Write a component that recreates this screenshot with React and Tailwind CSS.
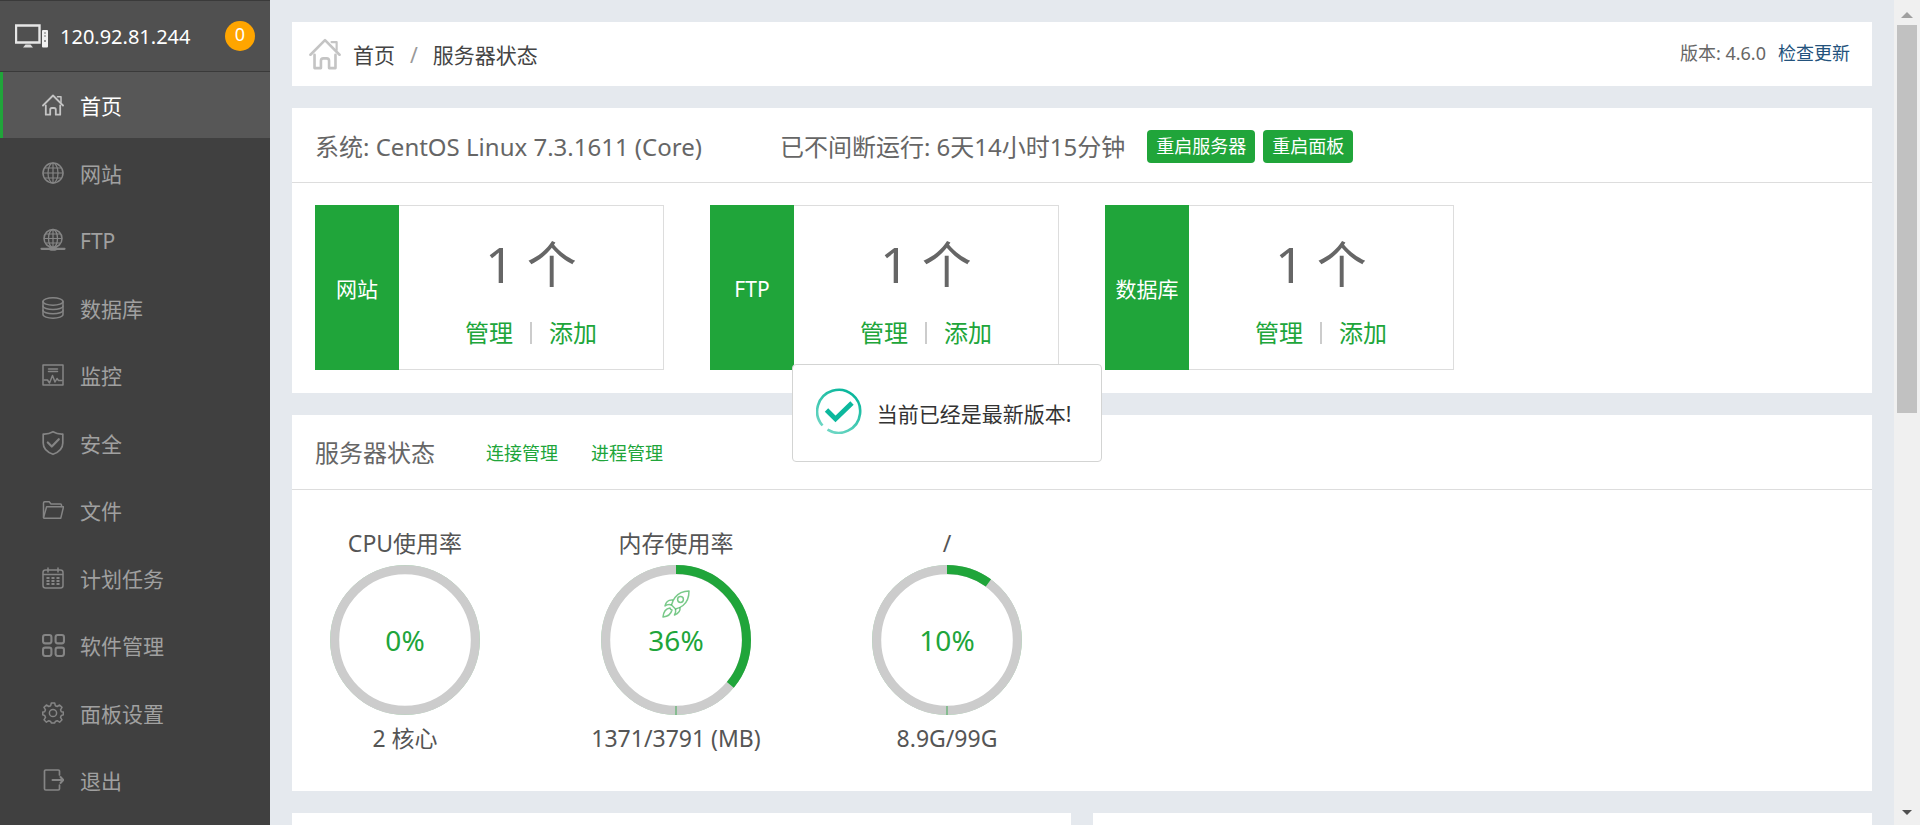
import React, { useState } from 'react';
import clsx from 'clsx';

// icon menu: nét vẽ 22x22, màu theo chữ
const Icon = ({ children, className = 'w-[22px] h-[22px]' }) => (
  <svg viewBox="0 0 22 22" fill="none" stroke="currentColor" strokeWidth="1.5" strokeLinecap="round" strokeLinejoin="round" className={className} aria-hidden="true">
    {children}
  </svg>
);

const HouseIcon = ({ className }) => (
  <Icon className={className}>
    <path d="M1 11.5 11 1.5l10 10" strokeWidth="1.8" />
    <path d="M15.5 2.8h3.5v5.5" />
    <path d="M3.8 11.5v9.2h4.4v-5q0-1.700 1.700-1.700h2.200q1.700 0 1.700 1.700v5h4.400v-9.200" strokeWidth="1.8" />
  </Icon>
);

const SiteIcon = () => (
  <Icon>
    <circle cx="11" cy="11" r="10" />
    <ellipse cx="11" cy="11" rx="5" ry="10" strokeWidth="1.2" />
    <path d="M11 1v20M1 11h20M2.5 6h17M2.5 16h17" strokeWidth="1.2" />
  </Icon>
);

const FtpIcon = () => (
  <Icon className="w-6 h-[22px] overflow-visible">
    <circle cx="11" cy="9.5" r="9" />
    <ellipse cx="11" cy="9.5" rx="4.5" ry="9" strokeWidth="1.3" />
    <path d="M11 1v17M2.5 9.5h17M4 5h14M4 14h14" strokeWidth="1.2" />
    <path d="M-.5 19.8h23" strokeWidth="2.2" />
    <path d="M9 19.8h4" strokeWidth="4" />
  </Icon>
);

const DatabaseIcon = () => (
  <Icon>
    <ellipse cx="11" cy="4.500" rx="10" ry="3.700" />
    <path d="M1 4.500v13c0 2 4.500 3.700 10 3.700s10-1.700 10-3.700v-13" />
    <path d="M1 9c0 2 4.500 3.500 10 3.500S21 11 21 9M1 13.300c0 2 4.500 3.500 10 3.500s10-1.500 10-3.500" />
  </Icon>
);

const MonitorIcon = () => (
  <Icon>
    <path d="M1 1h20v20H1z" />
    <path d="M6.500 5h9M6.500 7.500h9" />
    <path d="M2 16h3.500l2 3 3-7.500 2.500 6.500 2-3.500 1.500 2h3.500" />
  </Icon>
);

const ShieldIcon = () => (
  <Icon className="w-[22px] h-6 overflow-visible">
    <path d="M11-.3C8 1.500 5 2.200 1.200 2v9c0 5.500 4 9.200 9.800 11.300 5.800-2.100 9.800-5.800 9.800-11.300V2C17 2.200 14 1.500 11-.3z" strokeWidth="1.700" />
    <path d="m5.800 10.500 4 4 7-7.300" strokeWidth="2.200" />
  </Icon>
);

const FolderIcon = () => (
  <Icon>
    <path d="M1.500 18V4q0-1.200 1.200-1.200h4.500L9 5h9.500q1 0 1 1v1.500" />
    <path d="M1.500 18.500 4.600 7.800H21.500L18.800 19.200H2z" />
  </Icon>
);

const CalendarIcon = () => (
  <Icon>
    <rect x="1" y="3" width="20" height="18" rx="2.500" />
    <path d="M1.500 7.500h19M6 1v4M16 1v4" />
    <path d="M4.500 11h13M4.500 14h13M4.500 17h13" strokeWidth="1.800" strokeDasharray="3 2" strokeLinecap="butt" />
  </Icon>
);

const AppsIcon = () => (
  <Icon className="w-[23px] h-[23px]">
    <g strokeWidth="2">
      <rect x="1" y="1" width="8" height="8" rx="2" />
      <rect x="13" y="1" width="8" height="8" rx="2" />
      <rect x="1" y="13" width="8" height="8" rx="2" />
      <rect x="13" y="13" width="8" height="8" rx="2" />
    </g>
  </Icon>
);

const GearIcon = () => (
  <Icon>
    <circle cx="11" cy="11" r="3.600" />
    <path d="M9.300 1h3.400l.6 2.700 1.900.8 2.400-1.500 2.400 2.400-1.500 2.400.8 1.900 2 .4v2.800l-2 .6-.8 1.900 1.500 2.400-2.400 2.400-2.400-1.500-1.900.8-.6 1.500H9.300l-.6-1.500-1.900-.8-2.400 1.500L2 17.800l1.500-2.400-.8-1.900-1.900-.6v-2.800l1.900-.4.8-1.900L2 5.400 4.400 3l2.400 1.500 1.900-.8z" />
  </Icon>
);

const ExitIcon = () => (
  <Icon>
    <path d="M17.500 6V2.200q0-1.200-1.200-1.200H3.700Q2.500 1 2.500 2.200v17.600q0 1.200 1.200 1.200h12.600q1.200 0 1.200-1.200V16" strokeWidth="1.700" />
    <path d="M10.500 11h10M18.500 8l2.800 3-2.800 3" strokeWidth="2" />
  </Icon>
);

const ComputerIcon = () => (
  <svg viewBox="0 0 34 25" className="w-[34px] h-[25px]" aria-hidden="true">
    <path d="M1 1.500h23.500v17H1z" fill="none" stroke="#e6e6e6" strokeWidth="2.400" />
    <path d="M10.500 20.500h5l2.500 3H8z" fill="#ddd" />
    <rect x="27" y="6" width="6" height="17.500" rx="1" fill="#f2f2f2" />
    <path d="M29 9h2M29 12h2" stroke="#777" />
    <circle cx="30" cy="17" r="1" fill="#777" />
  </svg>
);

const RocketIcon = () => (
  <svg viewBox="0 0 28 28" fill="none" stroke="#20a53a" strokeOpacity=".6" strokeWidth="1.500" strokeLinejoin="round" className="w-7 h-7" aria-hidden="true">
    <path d="M27 1c-6 0-10.500 2-14 6.500-2 2.500-3 5.500-3.500 7.500l4 4c2-.5 5-1.500 7.500-3.500C25.500 12 27 7 27 1z" />
    <circle cx="18.500" cy="9.500" r="2.900" />
    <path d="M11 10c-4-.5-7 1.500-8 6 2-1.500 4-2 6.500-1M18 17.500c.5 4-1.500 6-5.500 7.500 1.300-2 1.500-4 1-6" />
    <path d="M8 18c-4 .5-6.500 4-7 9 5-.5 8-3 9-7-1-.2-1.800-1-2-2z" />
  </svg>
);

const SuccessIcon = () => (
  <svg viewBox="0 0 46 46" fill="none" className="w-[46px] h-[46px] mb-1" aria-hidden="true">
    <defs>
      <linearGradient id="ring" x1="0" y1="1" x2="0.6" y2="0">
        <stop offset="0" stopColor="#7fdccb" />
        <stop offset="1" stopColor="#0cb89d" />
      </linearGradient>
    </defs>
    <path d="M6.500 37.500A21.500 21.500 0 1 1 11.500 41.700" stroke="url(#ring)" strokeWidth="2.600" />
    <path d="m10.500 22 9 9L36 15" stroke="#0cb89d" strokeWidth="4.800" />
  </svg>
);

const MENU = [
  { label: '首页', icon: HouseIcon },
  { label: '网站', icon: SiteIcon },
  { label: 'FTP', icon: FtpIcon },
  { label: '数据库', icon: DatabaseIcon },
  { label: '监控', icon: MonitorIcon },
  { label: '安全', icon: ShieldIcon },
  { label: '文件', icon: FolderIcon },
  { label: '计划任务', icon: CalendarIcon },
  { label: '软件管理', icon: AppsIcon },
  { label: '面板设置', icon: GearIcon },
  { label: '退出', icon: ExitIcon },
];

const COUNTS = [
  { label: '网站', count: 1 },
  { label: 'FTP', count: 1 },
  { label: '数据库', count: 1 },
];

const GAUGES = [
  { title: 'CPU使用率', percent: 0, detail: '2 核心' },
  { title: '内存使用率', percent: 36, detail: '1371/3791 (MB)', rocket: true },
  { title: '/', percent: 10, detail: '8.9G/99G' },
];

const Sidebar = ({ active, onSelect }) => (
  <aside className="w-[270px] shrink-0 flex flex-col bg-[#404040]">
    <div className="h-[72px] shrink-0 flex items-center px-[15px] bg-[#505050] border-y border-[#3a3a3a]">
      <ComputerIcon />
      <span className="ml-[11px] pt-0.5 text-xl text-white">120.92.81.244</span>
      <button className="ml-auto w-[30px] h-[30px] rounded-full bg-[#ffa500] text-white text-lg leading-[26px] pb-1">0</button>
    </div>
    <nav className="flex-1 flex flex-col justify-between pb-3">
      {MENU.map(({ label, icon: MenuIcon }) => (
        <a
          key={label}
          href="#"
          onClick={() => onSelect(label)}
          className={clsx(
            'h-[66px] flex items-center border-l-[3px] pl-[38px] text-[21px]',
            active === label ? 'bg-[#575757] border-[#20a53a] text-white' : 'border-transparent text-[#a0a0a0]'
          )}
        >
          <span className={clsx('w-6 mr-[15px] flex justify-center', active === label ? 'text-[#c4c4c4]' : 'text-[#858585]')}>
            <MenuIcon />
          </span>
          <span className="pt-1">{label}</span>
        </a>
      ))}
    </nav>
  </aside>
);

const CountCard = ({ label, count }) => (
  <div className="w-[349px] h-[165px] flex">
    <div className="w-[84px] flex items-center justify-center bg-[#20a53a] text-white text-[21px] pt-1">{label}</div>
    <div className="flex-1 flex flex-col items-center border border-l-0 border-[#ddd] pt-[22px]">
      <div className="text-[50px] leading-[72px] text-[#666]">{count} 个</div>
      <div className="mt-[15px] flex items-center text-2xl leading-9 text-[#20a53a]">
        <a href="#">管理</a>
        <span className="mx-[17px] w-0.5 h-[22px] bg-[#ccc]" />
        <a href="#">添加</a>
      </div>
    </div>
  </div>
);

const Gauge = ({ title, percent, detail, rocket }) => (
  <div className="w-[180px] flex flex-col items-center text-[#555] whitespace-nowrap">
    <div className="text-[23px] leading-8">{title}</div>
    <div className="relative mt-1.5 w-[150px] h-[150px]">
      <svg viewBox="0 0 150 150" fill="none" className="w-full h-full" aria-hidden="true">
        <circle cx="75" cy="75" r="74.5" stroke="#20a53a" strokeOpacity=".4" />
        <circle cx="75" cy="75" r="70.3" stroke="#ccc" strokeWidth="9" />
        {percent > 0 && (
          <>
            <path d="M75 141v9" stroke="#20a53a" strokeOpacity=".8" />
            <circle cx="75" cy="75" r="70.5" stroke="#20a53a" strokeWidth="9" pathLength="100" strokeDasharray={`${percent} 100`} transform="rotate(-90 75 75)" />
          </>
        )}
      </svg>
      <div className="absolute inset-0 flex items-center justify-center text-[28px] text-[#20a53a]">{percent}%</div>
      {rocket && (
        <button className="absolute left-[61px] top-[25px]" aria-label="释放内存">
          <RocketIcon />
        </button>
      )}
    </div>
    <div className="mt-[7px] text-[23px] leading-8">{detail}</div>
  </div>
);

const Scrollbar = () => (
  <div className="w-[26px] shrink-0 flex flex-col items-center bg-[#f0f0f0]">
    <button className="h-[25px] flex items-center" aria-label="向上滚动">
      <svg viewBox="0 0 12 6" className="w-3 h-1.5 mt-1" aria-hidden="true"><path d="M0 6h12L6 0z" fill="#a0a0a0" /></svg>
    </button>
    <div className="w-5 h-[388px] bg-[#c1c1c1]" />
    <button className="mt-auto h-[25px] flex items-center" aria-label="向下滚动">
      <svg viewBox="0 0 12 6" className="w-[10px] h-[5px]" aria-hidden="true"><path d="M0 0h12L6 6z" fill="#505050" /></svg>
    </button>
  </div>
);

const App = () => {
  const [active, setActive] = useState('首页');

  return (
    <div className="h-screen flex overflow-hidden bg-[#e5e9ee] font-['Noto_Sans','Noto_Sans_CJK_SC',sans-serif]">
      <Sidebar active={active} onSelect={setActive} />

      <main className="flex-1 min-w-0 flex flex-col gap-[22px] p-[22px] overflow-hidden">
        {/* Breadcrumb */}
        <div className="h-16 shrink-0 flex items-center bg-white pl-[17px] pr-[22px] text-[21px] text-[#444]">
          <span className="text-[#c4c4c4]"><HouseIcon className="w-[32px] h-[32px]" /></span>
          <nav className="ml-3 pt-[3px] flex gap-[15px]">
            <a href="#">首页</a>
            <span className="text-[#999]">/</span>
            <span>服务器状态</span>
          </nav>
          <div className="ml-auto pb-0.5 flex gap-3 text-lg text-[#666]">
            <span>版本: 4.6.0</span>
            <a href="#" className="text-[#23527c]">检查更新</a>
          </div>
        </div>

        {/* System info */}
        <section className="shrink-0 bg-white">
          <div className="h-[75px] flex items-center border-b border-[#ddd] px-[23px] pt-[3px] text-[#666] text-2xl whitespace-nowrap">
            <span>系统: CentOS Linux 7.3.1611 (Core)</span>
            <span className="ml-[78px]">已不间断运行: 6天14小时15分钟</span>
            <div className="ml-[22px] flex gap-2 text-lg leading-[33px] text-white">
              <button className="h-[33px] px-[9px] rounded bg-[#20a53a]">重启服务器</button>
              <button className="h-[33px] px-[9px] rounded bg-[#20a53a]">重启面板</button>
            </div>
          </div>
          <div className="flex flex-wrap gap-[46px] px-[23px] pt-[22px] pb-[23px]">
            {COUNTS.map((c) => <CountCard key={c.label} {...c} />)}
          </div>
        </section>

        {/* Server status */}
        <section className="shrink-0 bg-white">
          <div className="h-[75px] flex items-center border-b border-[#ddd] px-[23px] pt-0.5">
            <h2 className="text-2xl text-[#666]">服务器状态</h2>
            <div className="ml-[51px] flex gap-[33px] text-lg text-[#20a53a]">
              <a href="#">连接管理</a>
              <a href="#">进程管理</a>
            </div>
          </div>
          <div className="flex flex-wrap gap-[91px] px-[23px] pt-[37px] pb-[37px]">
            {GAUGES.map((g) => <Gauge key={g.title} {...g} />)}
          </div>
        </section>

        <div className="shrink-0 grid grid-cols-2 gap-[22px]">
          <section className="h-[75px] bg-white" />
          <section className="h-[75px] bg-white" />
        </div>
      </main>

      <Scrollbar />

      {/* Update message */}
      <div className="fixed inset-y-0 left-0 right-[26px] flex items-center justify-center pointer-events-none">
        <div role="status" className="h-[98px] flex items-center rounded-sm border border-[#d3d4d3] bg-white pl-[23px] pr-[30px] text-[21px] text-[#333]">
          <SuccessIcon />
          <span className="ml-[15px] pt-1">当前已经是最新版本!</span>
        </div>
      </div>
    </div>
  );
};

export default App;
